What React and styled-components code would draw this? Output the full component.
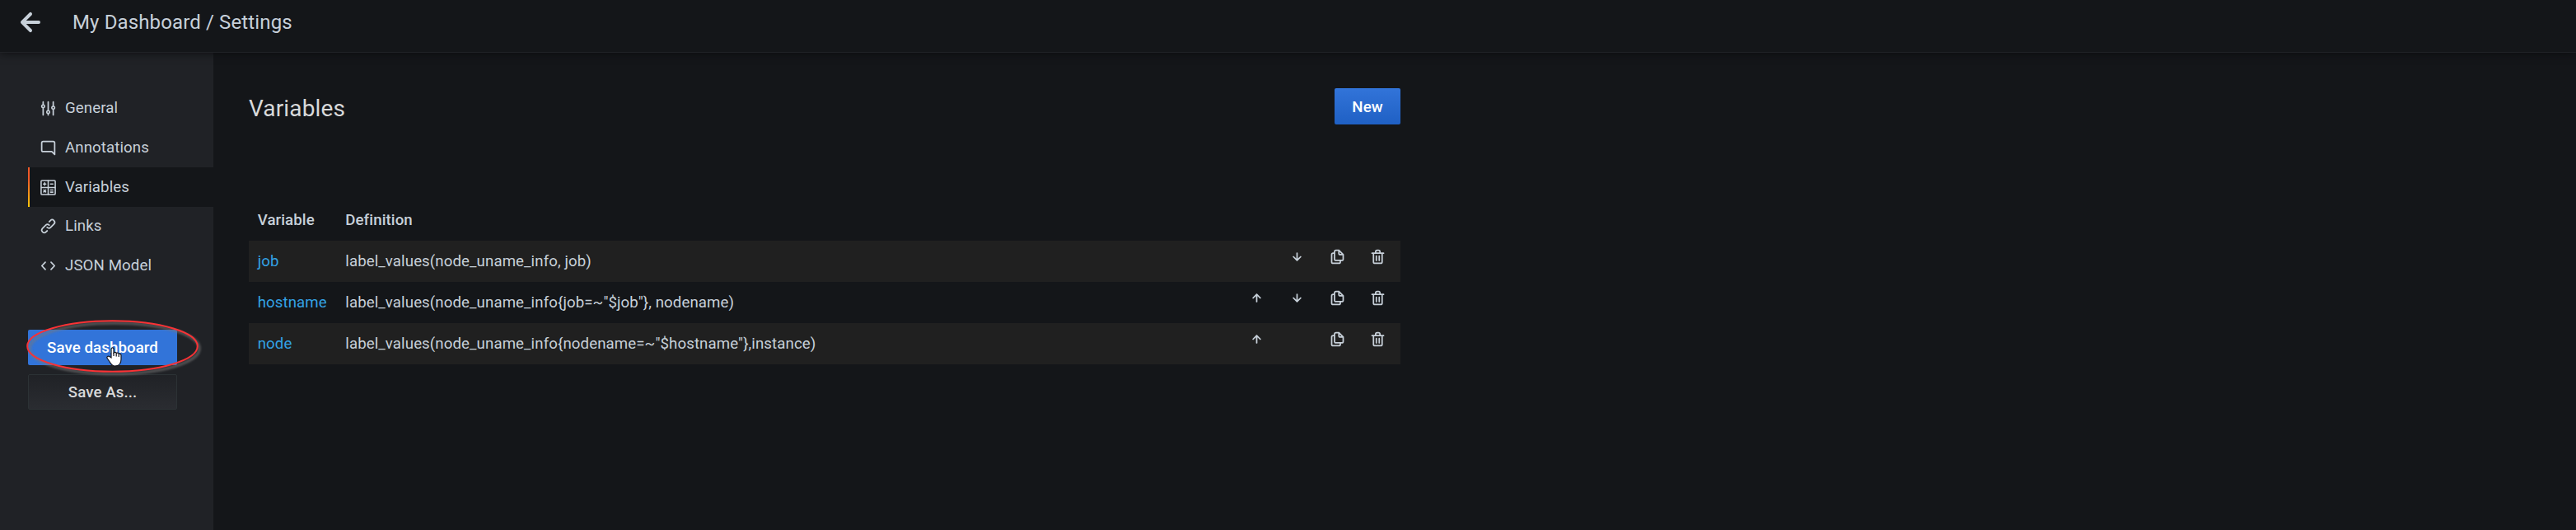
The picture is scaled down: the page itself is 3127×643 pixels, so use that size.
import React from "react";
import styled, { createGlobalStyle } from "styled-components";

const GlobalStyle = createGlobalStyle`
  * { box-sizing: border-box; }
  body {
    margin: 0;
    background: #141619;
    color: #c7d0d9;
    font-family: Roboto, "Liberation Sans", sans-serif;
    font-size: 18.67px;
    line-height: 28px;
    letter-spacing: 0.1px;
    overflow: hidden;
  }
`;

const Page = styled.div`
  height: 643px;
  display: flex;
  flex-direction: column;
`;

const Header = styled.header`
  position: relative;
  z-index: 1;
  flex: none;
  height: 64px;
  padding: 0 0 9px 13px;
  display: flex;
  align-items: center;
  background: #141619;
  border-bottom: 1px solid #202226;
  box-shadow: 0 0 10px #0b0c0e;
`;

const Title = styled.h1`
  margin: 0 0 0 27px;
  font-size: 24px;
  font-weight: 400;
  line-height: 32px;
  letter-spacing: 0.13px;
`;

const Body = styled.div`
  flex: 1;
  display: flex;
`;

const Sidebar = styled.aside`
  width: 259px;
  padding: 43px 0 0 34px;
  background: #202226;
`;

const NavItem = styled.a`
  height: 48px;
  display: flex;
  align-items: center;
  gap: 10px;
  padding-left: ${(p) => (p.$active ? "12px" : "14px")};
  background: ${(p) => (p.$active ? "#141619" : "transparent")};
  ${(p) => p.$active && `
    border-left: 2px solid;
    border-image: linear-gradient(#f05a28 30%, #fbca0a 99%) 1;
    & + & { margin-top: 0; }
  `}
  &:nth-child(4) {
    height: 47px;
    padding-bottom: 1px;
  }
`;

const Actions = styled.div`
  position: relative;
  width: 181px;
  margin-top: 54px;
  display: flex;
  flex-direction: column;
  gap: 11px;
`;

const Button = styled.button`
  height: ${(p) => p.$height || 43}px;
  width: ${(p) => p.$width || "100%"};
  padding: 1px 0 0;
  border: ${(p) => (p.$secondary ? "1px solid #2c3235" : "0")};
  border-radius: 2px;
  background: ${(p) => p.$fill};
  color: ${(p) => (p.$secondary ? "#d8d9da" : "#fff")};
  font: 500 18.67px/28px Roboto, "Liberation Sans", sans-serif;
  letter-spacing: 0.1px;
`;

const Highlight = styled.svg`
  position: absolute;
  left: -10px;
  top: -20px;
  overflow: visible;
`;

const Pointer = styled.svg`
  position: absolute;
  left: 95px;
  top: 21px;
`;

const Main = styled.main`
  width: 1441px;
  padding: 43px 0 0 43px;
`;

const Heading = styled.div`
  display: flex;
  align-items: flex-start;
  justify-content: space-between;
  height: 134px;
`;

const SectionTitle = styled.h2`
  margin: 6px 0 0;
  font-size: 28px;
  font-weight: 400;
  line-height: 37px;
  letter-spacing: 0.15px;
  color: #d8d9da;
`;

const Row = styled.div`
  display: grid;
  grid-template-columns: 106.6px 1fr repeat(4, 49px);
  align-items: center;
  height: ${(p) => (p.$head ? 51 : 50)}px;
  padding: 0 3px 0 10.67px;
  font-weight: ${(p) => (p.$head ? 500 : 400)};
  background: ${(p) => (p.$shaded ? "#202020" : "transparent")};
`;

const Name = styled.a`
  color: #33a2e5;
`;

const Cell = styled.span`
  display: flex;
  justify-content: center;
  padding-bottom: 11px;
`;

const icons = {
  back: "M17,11H9.41l3.3-3.29a1,1,0,1,0-1.42-1.42l-5,5a1,1,0,0,0-.21.33,1,1,0,0,0,0,.76,1,1,0,0,0,.21.33l5,5a1,1,0,0,0,1.42,0,1,1,0,0,0,0-1.42L9.41,13H17a1,1,0,0,0,0-2Z",
  down: "M17.71,11.29a1,1,0,0,0-1.42,0L13,14.59V7a1,1,0,0,0-2,0v7.59l-3.29-3.3a1,1,0,0,0-1.42,1.42l5,5a1,1,0,0,0,.33.21.94.94,0,0,0,.76,0,1,1,0,0,0,.33-.21l5-5A1,1,0,0,0,17.71,11.29Z",
  up: "M17.71,11.29l-5-5a1,1,0,0,0-.33-.21,1,1,0,0,0-.76,0,1,1,0,0,0-.33.21l-5,5a1,1,0,0,0,1.42,1.42L11,9.41V17a1,1,0,0,0,2,0V9.41l3.29,3.3a1,1,0,0,0,1.42,0A1,1,0,0,0,17.71,11.29Z",
  copy: "M21,8.94a1.31,1.31,0,0,0-.06-.27l0-.09a1.07,1.07,0,0,0-.19-.28h0l-6-6h0a1.07,1.07,0,0,0-.28-.19.32.32,0,0,0-.09,0A.88.88,0,0,0,14.05,2H10A3,3,0,0,0,7,5V6H6A3,3,0,0,0,3,9V19a3,3,0,0,0,3,3h8a3,3,0,0,0,3-3V18h1a3,3,0,0,0,3-3V9S21,9,21,8.94ZM15,5.41,17.59,8H16a1,1,0,0,1-1-1ZM15,19a1,1,0,0,1-1,1H6a1,1,0,0,1-1-1V9A1,1,0,0,1,6,8H7v7a3,3,0,0,0,3,3h5Zm4-4a1,1,0,0,1-1,1H10a1,1,0,0,1-1-1V5a1,1,0,0,1,1-1h3V7a3,3,0,0,0,3,3h3Z",
  trash: "M10,18a1,1,0,0,0,1-1V11a1,1,0,0,0-2,0v6A1,1,0,0,0,10,18ZM20,6H16V5a3,3,0,0,0-3-3H11A3,3,0,0,0,8,5V6H4A1,1,0,0,0,4,8H5V19a3,3,0,0,0,3,3h8a3,3,0,0,0,3-3V8h1a1,1,0,0,0,0-2ZM10,5a1,1,0,0,1,1-1h2a1,1,0,0,1,1,1V6H10Zm7,14a1,1,0,0,1-1,1H8a1,1,0,0,1-1-1V8H17Zm-3-1a1,1,0,0,0,1-1V11a1,1,0,0,0-2,0v6A1,1,0,0,0,14,18Z",
  sliders: "M20,8.18V3a1,1,0,0,0-2,0V8.18a3,3,0,0,0,0,5.64V21a1,1,0,0,0,2,0V13.82a3,3,0,0,0,0-5.64ZM19,12a1,1,0,1,1,1-1A1,1,0,0,1,19,12Zm-6,2.18V3a1,1,0,0,0-2,0V14.18a3,3,0,0,0,0,5.64V21a1,1,0,0,0,2,0V19.82a3,3,0,0,0,0-5.64ZM12,18a1,1,0,1,1,1-1A1,1,0,0,1,12,18ZM6,6.18V3A1,1,0,0,0,4,3V6.18a3,3,0,0,0,0,5.64V21a1,1,0,0,0,2,0V11.82A3,3,0,0,0,6,6.18ZM5,10A1,1,0,1,1,6,9,1,1,0,0,1,5,10Z",
  comment: "M19,2H5A3,3,0,0,0,2,5V15a3,3,0,0,0,3,3H16.59l3.7,3.71A1,1,0,0,0,21,22a.84.84,0,0,0,.38-.08A1,1,0,0,0,22,21V5A3,3,0,0,0,19,2Zm1,16.59-2.29-2.3A1,1,0,0,0,17,16H5a1,1,0,0,1-1-1V5A1,1,0,0,1,5,4H19a1,1,0,0,1,1,1Z",
  link: "M10,17.55,8.23,19.27a2.47,2.47,0,0,1-3.5-3.5l4.54-4.55a2.46,2.46,0,0,1,3.39-.09l.12.1a1,1,0,0,0,1.4-1.43A2.75,2.75,0,0,0,14,9.59a4.46,4.46,0,0,0-6.09.22L3.31,14.36a4.48,4.48,0,0,0,6.33,6.33L11.37,19A1,1,0,0,0,10,17.55ZM20.69,3.31a4.49,4.49,0,0,0-6.33,0L12.63,5A1,1,0,0,0,14,6.45l1.73-1.72a2.47,2.47,0,0,1,3.5,3.5l-4.54,4.55a2.46,2.46,0,0,1-3.39.09l-.12-.1a1,1,0,0,0-1.4,1.43,2.75,2.75,0,0,0,.23.21,4.47,4.47,0,0,0,6.09-.22l4.55-4.55A4.49,4.49,0,0,0,20.69,3.31Z",
};

const outlines = {
  calculator: {
    width: 1.8,
    d: "M3.5 2.2H20.5A1.3 1.3 0 0 1 21.8 3.5V20.5A1.3 1.3 0 0 1 20.5 21.8H3.5A1.3 1.3 0 0 1 2.2 20.5V3.5A1.3 1.3 0 0 1 3.5 2.2ZM12 2V22M2 12H22M5.4 7.2H8.8M7.1 5.5V8.9M15.2 7.2H18.6M5.8 15.4L8.6 18.2M8.6 15.4L5.8 18.2M15.2 15.4H18.6M15.2 18.4H18.6",
  },
  brackets: { width: 2, d: "M8 7L3.2 12L8 17M16 7L20.8 12L16 17" },
};

function Icon({ name, size = 21 }) {
  const outline = outlines[name];
  return (
    <svg width={size} height={size} viewBox="0 0 24 24" fill="#c7d0d9">
      {outline ? (
        <path d={outline.d} fill="none" stroke="#c7d0d9" strokeWidth={outline.width} strokeLinecap="round" strokeLinejoin="round" />
      ) : (
        <path d={icons[name]} />
      )}
    </svg>
  );
}

const nav = [
  ["sliders", "General"],
  ["comment", "Annotations"],
  ["calculator", "Variables"],
  ["link", "Links"],
  ["brackets", "JSON Model"],
];

const variables = [
  { name: "job", definition: "label_values(node_uname_info, job)", down: true },
  { name: "hostname", definition: 'label_values(node_uname_info{job=~"$job"}, nodename)', up: true, down: true },
  { name: "node", definition: 'label_values(node_uname_info{nodename=~"$hostname"},instance)', up: true },
];

export default function App() {
  return (
    <Page>
      <GlobalStyle />
      <Header>
        <Icon name="back" size={48} />
        <Title>My Dashboard / Settings</Title>
      </Header>
      <Body>
        <Sidebar>
          {nav.map(([icon, label]) => (
            <NavItem key={label} $active={label === "Variables"}>
              <Icon name={icon} />
              {label}
            </NavItem>
          ))}
          <Actions>
            <Button $fill="#3274d9">Save dashboard</Button>
            <Button $secondary $fill="linear-gradient(#202226, #2a2c31)">Save As...</Button>
            <Highlight width="230" height="82" fill="none">
              <defs>
                <filter id="soft" x="-10%" y="-20%" width="120%" height="140%">
                  <feGaussianBlur stdDeviation="0.9" />
                </filter>
              </defs>
              <ellipse cx="115" cy="42.7" rx="103" ry="30.8" stroke="#777" strokeOpacity="0.5" strokeWidth="4" filter="url(#soft)" />
              <ellipse cx="112.5" cy="40" rx="103.3" ry="30.7" stroke="#fa3235" strokeWidth="2" />
            </Highlight>
            <Pointer width="19" height="24" viewBox="0 0 19 24">
              <path d="M6 12V2.5C6 .4 9 .4 9 2.5V7C10 6 12 6.3 12.2 7.5C13.3 6.7 15 7.2 15.2 8.4C16.5 7.7 18 8.5 18 10V15C18 20 15 23 10.5 23C7.5 23 6 21 4.8 19L1.4 14C0 12 2 10.4 3.8 11.6L6 13Z" fill="#fff" stroke="#14151c" strokeWidth="1.2" />
              <path d="M9 7V11M12.2 8V11.5M15.2 9V12" stroke="#14151c" strokeWidth="1.2" />
            </Pointer>
          </Actions>
        </Sidebar>
        <Main>
          <Heading>
            <SectionTitle>Variables</SectionTitle>
            <Button $width="80px" $height={44} $fill="linear-gradient(#3274d9, #1f60c4)">New</Button>
          </Heading>
          <Row $head>
            <span>Variable</span>
            <span>Definition</span>
          </Row>
          {variables.map((v, i) => (
            <Row key={v.name} $shaded={i % 2 === 0}>
              <Name>{v.name}</Name>
              <span>{v.definition}</span>
              <Cell>{v.up && <Icon name="up" />}</Cell>
              <Cell>{v.down && <Icon name="down" />}</Cell>
              <Cell><Icon name="copy" /></Cell>
              <Cell><Icon name="trash" /></Cell>
            </Row>
          ))}
        </Main>
      </Body>
    </Page>
  );
}
